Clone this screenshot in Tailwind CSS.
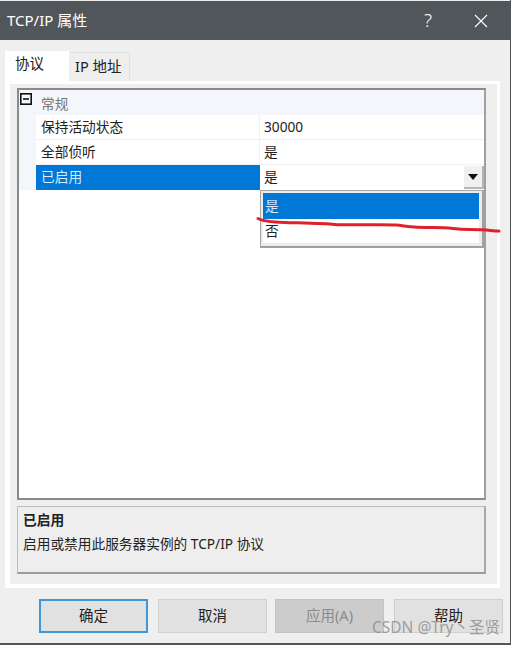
<!DOCTYPE html>
<html lang="zh">
<head>
  <meta charset="UTF-8" />
  <title>TCP/IP 属性</title>
  <script src="https://cdn.jsdelivr.net/npm/@tailwindcss/browser@4"></script>
</head>
<body class="bg-white text-[13.7px] text-[#222] font-['Noto_Sans','Noto_Sans_CJK_SC',sans-serif]">
  <div class="relative w-[516px] h-[646px] overflow-hidden">
    <!-- WINDOW -->
    <div class="w-[511px] h-[645px] bg-[#efefef] border-b-2 border-r border-[#50565a] flex flex-col">
      <!-- TITLE BAR -->
      <header class="h-[39px] mt-px bg-[#50565a] text-white flex items-center pl-[7px] shrink-0">
        <span class="text-[15px] flex-1">TCP/IP 属性</span>
        <span class="text-[19px] font-light w-[20px] text-center mr-[36px]">?</span>
        <svg class="w-[14px] h-[14px] mr-[22px]" viewBox="0 0 14 14" fill="none" stroke="white" stroke-width="1.1">
          <path d="M1 1l12 12M13 1L1 13" />
        </svg>
      </header>

      <!-- TABS -->
      <div class="flex items-end h-[41px] pl-[5px] shrink-0">
        <div class="w-[64px] h-[30px] bg-white pl-[10px] pt-[2px] text-[14.5px]">协议</div>
        <div class="w-[60px] h-[29px] ml-px bg-[#eeeeee] border-t border-r border-[#e0e0e0] pl-[5px] pt-[3px] text-[14.5px]">IP 地址</div>
      </div>

      <!-- TAB PANEL -->
      <div class="ml-[5px] w-[495px] h-[507px] border-[5px] border-t-[3px] border-r-[3px] border-b-[4px] border-white bg-[#efefef] pt-[4px] pl-[7px] pr-[11px] shrink-0">
        <!-- PROPERTY GRID -->
        <div class="w-[469px] h-[412px] border-2 border-[#8a8a8a] border-r-[#a0a0a0] bg-white">
          <div class="h-[25px] bg-[#f3f6fb] flex text-[#777]">
            <div class="w-[17px] pl-px pt-[3px]">
              <svg class="w-[12px] h-[12px]" viewBox="0 0 12 12" fill="none" stroke="#111" stroke-width="1.6">
                <rect x="0.8" y="0.8" width="10.4" height="10.4" />
                <path d="M3 6h6" />
              </svg>
            </div>
            <span class="pl-[5px] flex items-center pt-[3px]">常规</span>
          </div>
          <div class="flex h-[25px]">
            <div class="w-[17px] bg-[#f3f6fb]"></div>
            <div class="w-[224px] pl-[5px] flex items-center border-r border-b border-[#f0f0f0]">保持活动状态</div>
            <div class="flex-1 pl-[4px] flex items-center border-b border-[#f0f0f0]">30000</div>
          </div>
          <div class="flex h-[25px]">
            <div class="w-[17px] bg-[#f3f6fb]"></div>
            <div class="w-[224px] pl-[5px] flex items-center border-r border-b border-[#f0f0f0]">全部侦听</div>
            <div class="flex-1 pl-[4px] flex items-center border-b border-[#f0f0f0]">是</div>
          </div>
          <div class="flex h-[25px]">
            <div class="w-[17px] bg-[#f3f6fb]"></div>
            <div class="w-[224px] pl-[5px] flex items-center bg-[#0078d7] text-[#dcecfa]">已启用</div>
            <div class="flex-1 pl-[4px] flex items-center justify-between">
              <span>是</span>
              <div class="w-[20px] h-[23px] bg-[#f0f0f0] border-r-2 border-b-2 border-[#b5b5b5] flex items-center justify-center">
                <svg class="w-[10px] h-[6px]" viewBox="0 0 10 6"><path d="M0 0h10L5 6z" fill="#111" /></svg>
              </div>
            </div>
          </div>
        </div>

        <!-- DESCRIPTION -->
        <div class="w-[469px] h-[68px] mt-[6px] bg-[#eeeeee] border border-b-2 border-r-2 border-[#bcbcbc] border-b-[#9c9c9c] border-r-[#a8a8a8] pl-[5px] pt-px">
          <div class="font-bold leading-[24px]">已启用</div>
          <div class="leading-[24px]">启用或禁用此服务器实例的 TCP/IP 协议</div>
        </div>
      </div>

      <!-- BUTTONS -->
      <div class="flex pl-[39px] pt-[11px] text-[14.5px]">
        <button class="w-[109px] h-[34px] bg-[#e1e1e1] border-2 border-[#3f96d8]">确定</button>
        <button class="w-[109px] h-[34px] ml-[10px] bg-[#e1e1e1] border border-[#cfcfcf]">取消</button>
        <button class="w-[109px] h-[34px] ml-[8px] bg-[#cccccc] text-[#8a8a8a] border border-[#c4c4c4]">应用(A)</button>
        <button class="w-[109px] h-[34px] ml-[10px] bg-[#e1e1e1] border border-[#cfcfcf]">帮助</button>
      </div>
    </div>

    <!-- DROPDOWN LIST -->
    <div class="absolute left-[260px] top-[190px] w-[224px] h-[58px] border border-[#a6a6a6] border-r-2 border-b-2 border-r-[#a0a0a0] border-b-[#a0a0a0]">
      <div class="h-full bg-white border-2 border-t-[2px] border-r-[3px] border-b-[3px] border-[#ececec]">
        <div class="h-[26px] bg-[#0078d7] text-[#cfe6fb] pl-[2px] flex items-center">是</div>
        <div class="h-[25px] pl-[2px] flex items-center">否</div>
      </div>
    </div>

    <!-- RED ANNOTATION -->
    <svg class="absolute left-0 top-0 w-[516px] h-[646px] pointer-events-none" viewBox="0 0 516 646" fill="none">
      <path d="M258 218.5C262 221 270 222 285 222.5S325 223.5 335 224.5 385 224 396 225 410 227.5 433 227.5 450 229.5 470 229.5 490 231 499 231" stroke="#e0202a" stroke-width="3" stroke-linecap="round" />
    </svg>

    <!-- WATERMARK -->
    <div class="absolute left-[372px] top-[616px] text-[15.5px] text-[#8a8a8a]/80 whitespace-nowrap">CSDN @Try丶圣贤</div>
  </div>
</body>
</html>
